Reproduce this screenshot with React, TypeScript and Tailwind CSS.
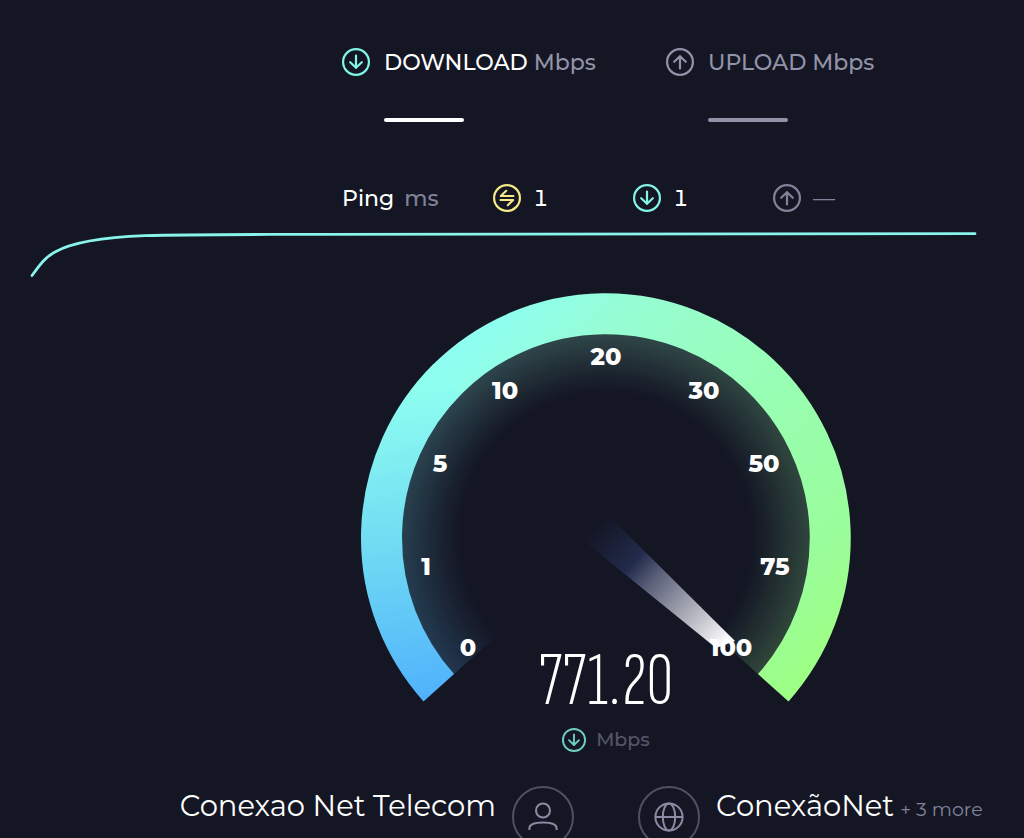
type IconProps = { className?: string };

function DownIcon({ className }: IconProps) {
  return (
    <svg viewBox="0 0 28 28" fill="none" stroke="currentColor" className={className} aria-hidden="true">
      <circle cx="14" cy="14" r="12.9" strokeWidth="2.2" />
      <path d="M14 7.6v12.4M8.2 14.2l5.8 5.6 5.8-5.6" strokeWidth="2.2" strokeLinecap="round" strokeLinejoin="round" />
    </svg>
  );
}

function UpIcon({ className }: IconProps) {
  return (
    <svg viewBox="0 0 28 28" fill="none" stroke="currentColor" className={className} aria-hidden="true">
      <circle cx="14" cy="14" r="12.9" strokeWidth="2.2" />
      <path d="M14 20.4V8M8.2 13.8l5.8-5.6 5.8 5.6" strokeWidth="2.2" strokeLinecap="round" strokeLinejoin="round" />
    </svg>
  );
}

function PingIcon({ className }: IconProps) {
  return (
    <svg viewBox="0 0 28 28" fill="none" stroke="currentColor" className={className} aria-hidden="true">
      <circle cx="14" cy="14" r="12.9" strokeWidth="2.2" />
      <path d="M20.5 12H7.8l5.4-5.2M7.5 16h12.7l-5.4 5.2" strokeWidth="2.1" strokeLinecap="round" strokeLinejoin="round" />
    </svg>
  );
}

const MARKS = [
  { label: "0", x: 108, y: 366 },
  { label: "1", x: 66, y: 285 },
  { label: "5", x: 80, y: 182 },
  { label: "10", x: 145, y: 109 },
  { label: "20", x: 246, y: 75 },
  { label: "30", x: 344, y: 109 },
  { label: "50", x: 404, y: 182 },
  { label: "75", x: 415, y: 285 },
  { label: "100", x: 371, y: 366 },
];

/* Arc pieces around the dial centre (246, 248). */
function arc(r: number, from: [number, number], to: [number, number]) {
  const p = ([x, y]: [number, number]) => `${(246 + x * r).toFixed(2)} ${(248 + y * r).toFixed(2)}`;
  return `M${p(from)}A${r} ${r} 0 0 1 ${p(to)}`;
}

const START: [number, number] = [-0.745, 0.667];
const MIDDLE: [number, number] = [-0.7071, -0.7071];
const OVERLAP: [number, number] = [-0.7045, -0.7097];
const END: [number, number] = [0.745, 0.667];

function Gauge() {
  return (
    <svg viewBox="0 0 492 414" className="col-start-1 row-start-1 w-full" role="img" aria-label="Download speed gauge">
      <defs>
        <linearGradient id="cool" gradientUnits="userSpaceOnUse" x1="90" y1="410" x2="50" y2="100">
          <stop offset="0" stopColor="#4fb0fc" />
          <stop offset="0.5" stopColor="#6fdaf3" />
          <stop offset="1" stopColor="#8efef0" />
        </linearGradient>
        <linearGradient id="warm" gradientUnits="userSpaceOnUse" x1="80" y1="90" x2="440" y2="410">
          <stop offset="0" stopColor="#8efef0" />
          <stop offset="0.18" stopColor="#96fdd5" />
          <stop offset="0.5" stopColor="#98feb6" />
          <stop offset="0.83" stopColor="#9afd9b" />
          <stop offset="1" stopColor="#9eff80" />
        </linearGradient>
        <radialGradient id="fade" gradientUnits="userSpaceOnUse" cx="246" cy="248" r="204">
          <stop offset="0.71" stopColor="#fff" stopOpacity="0" />
          <stop offset="0.8" stopColor="#fff" stopOpacity="0.06" />
          <stop offset="1" stopColor="#fff" stopOpacity="0.21" />
        </radialGradient>
        <mask id="glow" maskUnits="userSpaceOnUse" x="0" y="0" width="492" height="414">
          <rect width="492" height="414" fill="url(#fade)" />
        </mask>
        <linearGradient id="needle" gradientUnits="userSpaceOnUse" x1="235" y1="237" x2="366" y2="354">
          <stop offset="0" stopColor="#1f2948" stopOpacity="0" />
          <stop offset="0.3" stopColor="#222b4b" />
          <stop offset="0.45" stopColor="#5b6079" />
          <stop offset="0.75" stopColor="#b4b5be" />
          <stop offset="1" stopColor="#fff" />
        </linearGradient>
      </defs>
      <g fill="none" strokeWidth="64" mask="url(#glow)">
        <path d={arc(173, START, OVERLAP)} stroke="url(#cool)" />
        <path d={arc(173, MIDDLE, END)} stroke="url(#warm)" />
      </g>
      <g fill="none" strokeWidth="41">
        <path d={arc(224.5, START, OVERLAP)} stroke="url(#cool)" />
        <path d={arc(224.5, MIDDLE, END)} stroke="url(#warm)" />
      </g>
      <path d="M246 223L375 351L356 358L224 251Z" fill="url(#needle)" />
      <g className="fill-white text-[24px] font-extrabold" textAnchor="middle">
        {MARKS.map((m) => (
          <text key={m.label} x={m.x} y={m.y}>
            {m.label}
          </text>
        ))}
      </g>
    </svg>
  );
}

export default function App() {
  return (
    <main className="h-screen overflow-hidden bg-[#141624] pt-12 font-['Montserrat','Inter',sans-serif] text-white">
      <div className="pl-[188px]">
        <section className="mx-auto grid w-[528px] grid-cols-[324px_1fr] whitespace-nowrap text-[22px] font-medium leading-[30px]">
          <div className="flex gap-[14px]">
            <DownIcon className="size-7 shrink-0 text-[#83f5e6]" />
            <div>
              <h2>
                DOWNLOAD <span className="text-[#9293a8]">Mbps</span>
              </h2>
              <div className="mt-10 h-1 w-20 rounded-full bg-white" />
            </div>
          </div>
          <div className="flex gap-[14px] text-[#9293a8]">
            <UpIcon className="size-7 shrink-0" />
            <div>
              <h2>UPLOAD Mbps</h2>
              <div className="mt-10 h-1 w-20 rounded-full bg-[#9293a8]" />
            </div>
          </div>
        </section>

        <section className="mx-auto mt-[62px] grid w-[528px] grid-cols-[151px_140px_140px_1fr] text-[22px] tabular-nums leading-[30px]">
          <h3 className="flex gap-[10px] font-medium">
            Ping <span className="text-[#82839a]">ms</span>
          </h3>
          <p className="flex gap-3 font-medium">
            <PingIcon className="size-7 text-[#f5ea85]" />1
          </p>
          <p className="flex gap-3 font-medium">
            <DownIcon className="size-7 text-[#83f5e6]" />1
          </p>
          <p className="flex gap-3 text-[#82839a]">
            <UpIcon className="size-7" />—
          </p>
        </section>
      </div>

      <svg viewBox="0 0 1024 64" className="block w-full" fill="none" aria-hidden="true">
        <path
          d="M32 61.5C39 52 44 44 55 38C74 27 108 23 145 21.6C190 20.4 250 20.6 320 20.3L975 19.7"
          stroke="#88f4ec"
          strokeWidth="2.8"
          strokeLinecap="round"
        />
      </svg>

      <div className="pl-[188px]">
        <section className="mx-auto mt-3 grid w-[492px]">
          <Gauge />
          <div className="col-start-1 row-start-1 h-14 self-end text-center font-['Sofia_Sans_Extra_Condensed','Roboto_Condensed',sans-serif] text-[75px] font-light leading-[68px]">
            771.20
          </div>
        </section>
        <p className="mt-6 flex items-center justify-center gap-[10px] text-[19px] font-medium leading-6 text-[#555668]">
          <DownIcon className="size-6 text-[#70cfc4]" />
          Mbps
        </p>

        <footer className="mt-[34px] grid grid-cols-2 items-start gap-16 whitespace-nowrap text-[29px] leading-10">
          <div className="flex items-start justify-end gap-4">
            <p>Conexao Net Telecom</p>
            <svg viewBox="0 0 62 62" className="size-[62px] shrink-0 text-[#8b8ca3]" fill="none" stroke="currentColor" strokeWidth="2" aria-hidden="true">
              <circle cx="31" cy="31" r="30" stroke="#4f5063" />
              <circle cx="31" cy="24.5" r="7" />
              <path d="M17.4 44v-1.7c0-3.8 5-5.8 13.6-5.8s13.6 2 13.6 5.8V44" />
            </svg>
          </div>
          <div className="flex items-start gap-4">
            <svg viewBox="0 0 62 62" className="size-[62px] shrink-0 text-[#8b8ca3]" fill="none" stroke="currentColor" strokeWidth="2" aria-hidden="true">
              <circle cx="31" cy="31" r="30" stroke="#4f5063" />
              <circle cx="31" cy="31" r="13.6" />
              <ellipse cx="31" cy="31" rx="6.2" ry="13.6" />
              <path d="M17.4 31h27.2" />
            </svg>
            <p className="flex items-baseline gap-1.5">
              ConexãoNet <button className="text-[19px] text-[#82839a]">+ 3 more</button>
            </p>
          </div>
        </footer>
      </div>
    </main>
  );
}
